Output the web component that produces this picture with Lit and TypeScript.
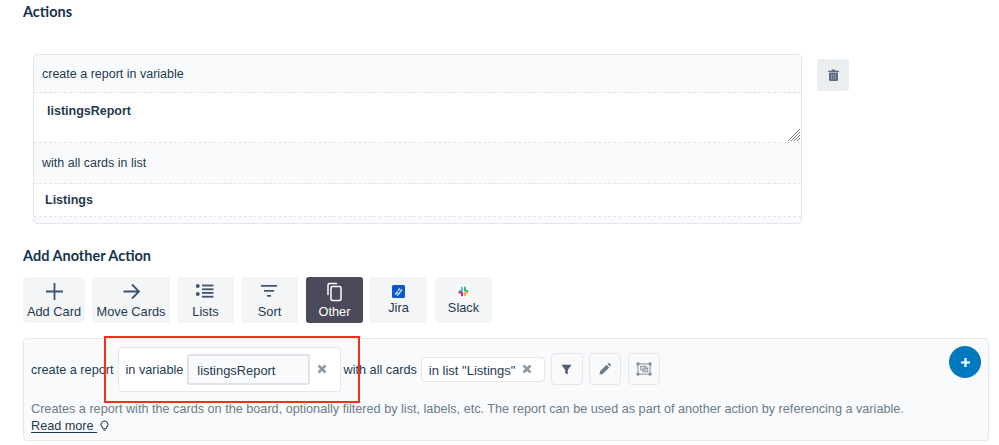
import { LitElement, html, css, svg } from "lit";
import { customElement } from "lit/decorators.js";

const I = {
  plus: svg`<path d="M10.500 2v17M2 10.500h17" stroke="#3d5170" stroke-width="1.800" fill="none"/>`,
  arrow: svg`<path d="M2.500 10.500h15M11 3.500l7 7-7 7" stroke="#3d5170" stroke-width="1.800" fill="none"/>`,
  list: svg`<g fill="#3d5170"><circle cx="2.800" cy="5" r="1.900"/><circle cx="2.800" cy="13" r="1.900"/><rect x="7" y="3.600" width="11.500" height="1.800"/><rect x="7" y="7.400" width="11.500" height="1.800"/><rect x="7" y="11" width="11.500" height="1.800"/><rect x="7" y="14.800" width="11.500" height="1.800"/></g>`,
  sort: svg`<g fill="#3d5170"><rect x="2" y="4" width="16" height="1.700"/><rect x="5" y="9" width="10" height="1.700"/><rect x="8" y="14" width="4" height="1.700"/></g>`,
  copy: svg`<path d="M13 2.500H5.500A1.500 1.500 0 0 0 4 4v10M8.500 5.500h7A1.500 1.500 0 0 1 17 7v11a1.500 1.500 0 0 1-1.500 1.500h-7A1.500 1.500 0 0 1 7 18V7a1.500 1.500 0 0 1 1.500-1.500z" stroke="#fff" stroke-width="1.500" fill="none"/>`,
};

@customElement("app-root")
export class AppRoot extends LitElement {
  static styles = css`
    :host { display: block; position: relative; width: 999px; height: 445px; overflow: hidden; background: #fff; color: #172b4d; font-family: "Liberation Sans", Arial, sans-serif; font-size: 12.5px; }
    * { box-sizing: border-box; }
    h2 { margin: 0; font: 700 14.5px/18px Lato, sans-serif; color: #16344c; }
    .page { display: flex; flex-direction: column; padding: 3px 10px 0 23px; }
    .actions { display: flex; gap: 15px; margin: 33px 0 0 10px; }
    .stack { width: 769px; height: 170px; border: 1px solid #e3e6ea; border-radius: 4px; background: #f9fafc; display: flex; flex-direction: column; }
    .row { display: flex; align-items: center; border-bottom: 1px dashed #e1e4e8; padding-left: 8px; color: #1f3a50; flex: none; }
    .r1 { height: 38px; }
    .r2 { height: 50px; background: #fff; align-items: flex-start; padding: 11px 0 0 13px; font-weight: 700; position: relative; }
    .r3 { height: 41px; }
    .r4 { height: 33px; background: #fff; padding-left: 11px; font-weight: 700; }
    .grip { position: absolute; right: 1px; bottom: 1px; }
    .trash { width: 32px; height: 32px; margin-top: 5px; background: #ebeef0; border-radius: 3px; display: grid; place-items: center; }
    .add { margin-top: 23px; }
    .tabs { display: flex; gap: 7px; margin-top: 12px; font-size: 12.8px; }
    .tab { height: 46px; background: #f4f5f7; border-radius: 3px; display: flex; flex-direction: column; align-items: center; padding-top: 4px; color: #1f3a50; }
    .tab svg { display: block; }
    .tab span { margin-top: 3px; line-height: 14px; }
    .tab.on { background: #4a4a5a; color: #fff; }
    .tab.lg { padding-top: 8px; }
    .tab.lg span { margin-top: 3px; }
    .w62 { width: 62px; }
    .w78 { width: 78px; }
    .w57 { width: 57px; }
    .shift { margin-left: 1px; }
    .panel { position: relative; width: 966px; height: 103px; margin-top: 15px; border: 1px solid #e6e8ec; border-radius: 4px; background: #f9fafc; padding: 7px 0 0 7px; color: #1f3a50; }
    .line { display: flex; align-items: center; height: 46px; font-size: 12.7px; }
    .line span { padding-top: 2px; }
    .group { display: flex; align-items: center; width: 223px; height: 45px; margin-left: 4px; padding-left: 7px; background: #fff; border: 1px solid #e4e6ea; border-radius: 4px; }
    .input { width: 123px; height: 31px; margin-left: 4px; padding-left: 8px; display: flex; align-items: center; background: #f9fafc; border: 2px solid #dfe3e8; border-radius: 3px; font-size: 12.9px; }
    .x { margin-left: 7px; flex: none; }
    .chip { display: flex; align-items: center; width: 124px; height: 25px; margin: 0 6px 0 4px; padding-left: 7px; background: #fff; border: 1px solid #e4e6ea; border-radius: 4px; font-size: 13px; }
    .sq { width: 32px; height: 32px; margin-right: 6px; background: #f9fafc; border: 1px solid #e4e6ea; border-radius: 4px; display: grid; place-items: center; }
    .sq.last { margin-left: 1px; }
    .with { margin-left: 3px; }
    .fab { position: absolute; right: 7px; top: 7px; width: 32px; height: 32px; border-radius: 50%; background: #0079bf; display: grid; place-items: center; }
    .desc { margin-top: 9px; color: #6b7c8a; line-height: 16px; font-size: 12.66px; }
    .more { margin-top: 1px; display: flex; align-items: center; line-height: 16px; font-size: 12.66px; }
    .more u { color: #1f3a50; text-underline-offset: 2px; white-space: pre; }
    .more svg { margin-left: 3px; }
    .red { position: absolute; left: 104px; top: 336px; width: 256px; height: 67px; border: 2px solid #f0301c; pointer-events: none; }
  `;

  private x() {
    return html`<svg class="x" width="10" height="10" viewBox="0 0 10 10"><path d="M1.500 1.500l7 7M8.500 1.500l-7 7" stroke="#8d9aa6" stroke-width="2.600"/></svg>`;
  }

  private ic(body: unknown) {
    return html`<svg width="21" height="21" viewBox="0 0 21 21">${body}</svg>`;
  }

  render() {
    return html`
      <div class="page">
        <h2>Actions</h2>
        <div class="actions">
          <div class="stack">
            <div class="row r1">create a report in variable</div>
            <div class="row r2">listingsReport
              <svg class="grip" width="12" height="12" viewBox="0 0 12 12"><path d="M12 0L0 12M12 3L3 12M12 6L6 12M12 9L9 12" stroke="#777" stroke-width="1"/></svg>
            </div>
            <div class="row r3">with all cards in list</div>
            <div class="row r4">Listings</div>
          </div>
          <div class="trash">
            <svg width="11" height="12" viewBox="0 0 11 12"><path d="M4 .5h3l.6 1.200H11v1.200H0V1.700h3.400zM1 3.500h9V11a1 1 0 0 1-1 1H2a1 1 0 0 1-1-1z" fill="#5a6f82"/><path d="M3.500 5v5.500M5.500 5v5.500M7.500 5v5.500" stroke="#8fa0ae" stroke-width=".8"/></svg>
          </div>
        </div>
        <h2 class="add">Add Another Action</h2>
        <div class="tabs">
          <div class="tab w62">${this.ic(I.plus)}<span>Add Card</span></div>
          <div class="tab w78">${this.ic(I.arrow)}<span>Move Cards</span></div>
          <div class="tab w57">${this.ic(I.list)}<span>Lists</span></div>
          <div class="tab w57">${this.ic(I.sort)}<span>Sort</span></div>
          <div class="tab on w57 shift">${this.ic(I.copy)}<span>Other</span></div>
          <div class="tab lg w57">
            <svg width="13" height="13" viewBox="0 0 13 13"><rect width="13" height="13" rx="1.500" fill="#0b57d0"/><path d="M3 9.500l3-3M5 10.500l3-3M6 5.500l2-2M8 7l2-2.500" stroke="#d4e3fb" stroke-width="1.500"/></svg>
            <span>Jira</span>
          </div>
          <div class="tab lg w57 shift">
            <svg width="13" height="13" viewBox="0 0 13 13"><rect width="13" height="13" rx="2" fill="#fff"/><g stroke-width="2" stroke-linecap="round"><path d="M5 2.500v3" stroke="#36c5f0"/><path d="M2.500 6h2" stroke="#36c5f0"/><path d="M8 2.500v3" stroke="#2eb67d"/><path d="M9 6h1.500" stroke="#2eb67d"/><path d="M8 8v2.500" stroke="#ecb22e"/><path d="M9 7.500h1.500" stroke="#ecb22e"/><path d="M5 8v2.500" stroke="#e01e5a"/><path d="M2.500 7.500h2" stroke="#e01e5a"/></g></svg>
            <span>Slack</span>
          </div>
        </div>
        <div class="panel">
          <div class="line">
            <span>create a report</span>
            <div class="group">
              <span>in variable</span>
              <div class="input"><span>listingsReport</span></div>
              ${this.x()}
            </div>
            <span class="with">with all cards</span>
            <div class="chip"><span>in list "Listings"</span>${this.x()}</div>
            <div class="sq"><svg width="11" height="11" viewBox="0 0 13 13"><path d="M.5 1h12L8 7v5.500L5 10.500V7z" fill="#4a6072"/></svg></div>
            <div class="sq"><svg width="12" height="12" viewBox="0 0 13 13"><path d="M.5 12.500l.8-3.700L8.200 1.900l2.900 2.900-7 7zM9.200 1l.8-.700a1 1 0 0 1 1.300 0l1.400 1.400a1 1 0 0 1 0 1.300l-.7.800z" fill="#6b7c8a"/></svg></div>
            <div class="sq last"><svg width="16" height="14" viewBox="0 0 17 15"><g fill="none" stroke="#7b8a97"><rect x="2" y="2" width="13" height="11"/><rect x="5" y="4.500" width="5.500" height="4"/><rect x="7.500" y="6.500" width="5" height="4"/></g><g fill="#7b8a97"><rect x=".5" y=".5" width="3" height="3"/><rect x="13.500" y=".5" width="3" height="3"/><rect x=".5" y="11.500" width="3" height="3"/><rect x="13.500" y="11.500" width="3" height="3"/></g></svg></div>
          </div>
          <div class="fab"><svg width="11" height="11" viewBox="0 0 11 11"><path d="M5.500 1v9M1 5.500h9" stroke="#fff" stroke-width="2.200"/></svg></div>
          <div class="desc">Creates a report with the cards on the board, optionally filtered by list, labels, etc. The report can be used as part of another action by referencing a variable.</div>
          <div class="more"><u>Read more </u><svg width="9" height="12" viewBox="0 0 9 12"><path d="M4.500 1a3.500 3.500 0 0 0-2 6.300c.4.400.5.800.6 1.400h2.800c.1-.6.200-1 .6-1.400A3.500 3.500 0 0 0 4.500 1zM3.400 10.300h2.200" fill="none" stroke="#2c4257" stroke-width="1.100"/></svg></div>
        </div>
      </div>
      <div class="red"></div>
    `;
  }
}
